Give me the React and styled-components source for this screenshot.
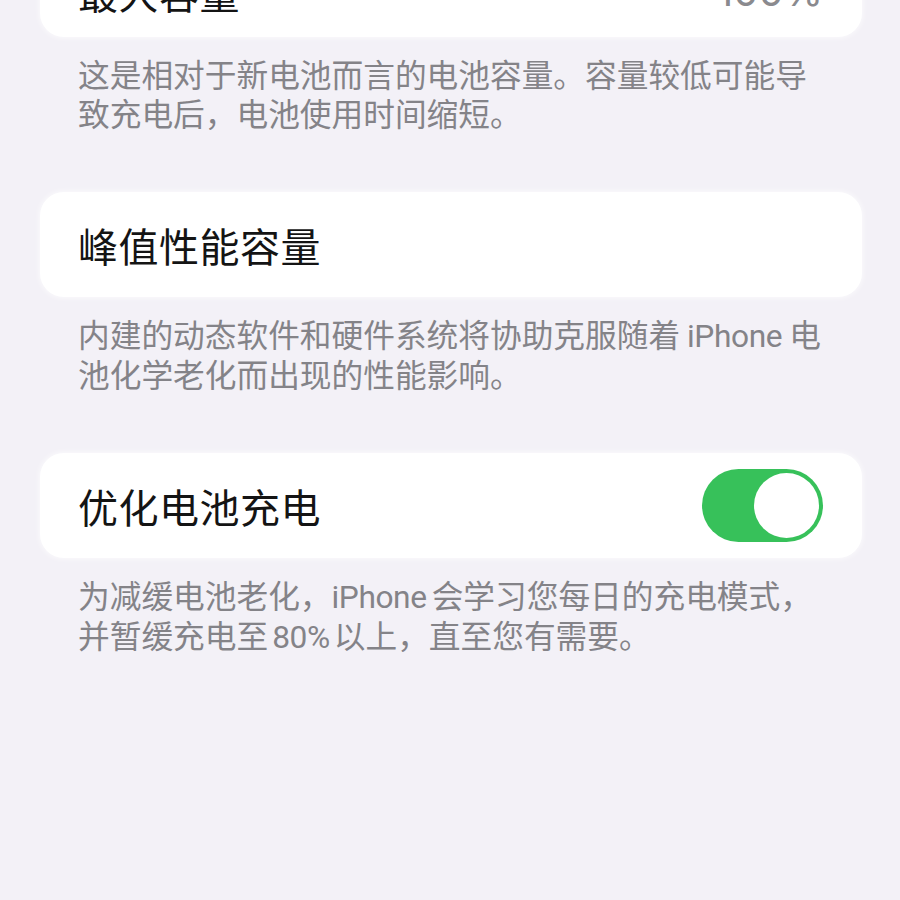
import React from 'react';
import styled, { createGlobalStyle } from 'styled-components';

const GlobalStyle = createGlobalStyle`
    body {
        margin: 0;
        background: #f3f1f7;
        font-family: "Inter", "Noto Sans CJK SC", sans-serif;
    }
`

function Toggle({ on }) {
    return (
        <Switch $on={on}>
            <Thumb />
        </Switch>
    );
}

function App() {
    return (
        <>
            <GlobalStyle />
            <Page>
                <Group>
                    <Card $first>
                        <Title>最大容量</Title>
                        <Value>100%</Value>
                    </Card>
                    <Footer>
                        这是相对于新电池而言的电池容量。容量较低可能导<br />
                        致充电后，电池使用时间缩短。
                    </Footer>
                </Group>
                <Group>
                    <Card>
                        <Title>峰值性能容量</Title>
                    </Card>
                    <Footer>
                        内建的动态软件和硬件系统将协助克服随着<Latin $left="7px" $right="7px">iPhone</Latin>电<br />
                        池化学老化而出现的性能影响。
                    </Footer>
                </Group>
                <Group>
                    <Card>
                        <Title>优化电池充电</Title>
                        <Toggle on />
                    </Card>
                    <Footer>
                        为减缓电池老化，<Latin $right="5px">iPhone</Latin>会学习您每日的充电模式，<br />
                        并暂缓充电至<Latin $left="4px" $right="4px">80%</Latin>以上，直至您有需要。
                    </Footer>
                </Group>
            </Page>
        </>
    );
}

const Page = styled.div`
    height: 900px;
    overflow: hidden;
    padding: 0 38px 0 40px;
    box-sizing: border-box;
    display: flex;
    flex-direction: column;
    gap: 58px;
`
const Group = styled.section`
    display: flex;
    flex-direction: column;
`
const Card = styled.div`
    height: 105px;
    margin-top: ${props => (props.$first ? '-68px' : '0')};
    padding: ${props => (props.$first ? '14px' : '0')} 39px 0 38px;
    box-sizing: border-box;
    background: #ffffff;
    border-radius: 24px;
    box-shadow: 0 0 6px rgba(255, 255, 255, 0.9);
    display: flex;
    align-items: center;
    justify-content: space-between;
`
const Title = styled.span`
    font-size: 40px;
    color: #141414;
    letter-spacing: 0.5px;
`
const Value = styled.span`
    font-size: 40px;
    color: #8a8a8e;
`
const Footer = styled.p`
    margin: 0;
    padding: 19px 38px 0;
    font-size: 31.7px;
    line-height: 39px;
    color: #848388;
    white-space: nowrap;
`
const Latin = styled.span`
    font-family: "Roboto", sans-serif;
    letter-spacing: -0.4px;
    margin-left: ${props => props.$left || '0'};
    margin-right: ${props => props.$right || '0'};
`
const Switch = styled.div`
    width: 121px;
    height: 73px;
    border-radius: 37px;
    background: ${props => (props.$on ? '#37c15a' : '#e5e5ea')};
    display: flex;
    align-items: center;
    justify-content: ${props => (props.$on ? 'flex-end' : 'flex-start')};
    padding: 0 4px;
    box-sizing: border-box;
`
const Thumb = styled.div`
    width: 65px;
    height: 65px;
    border-radius: 50%;
    background: #ffffff;
`

export default App;
